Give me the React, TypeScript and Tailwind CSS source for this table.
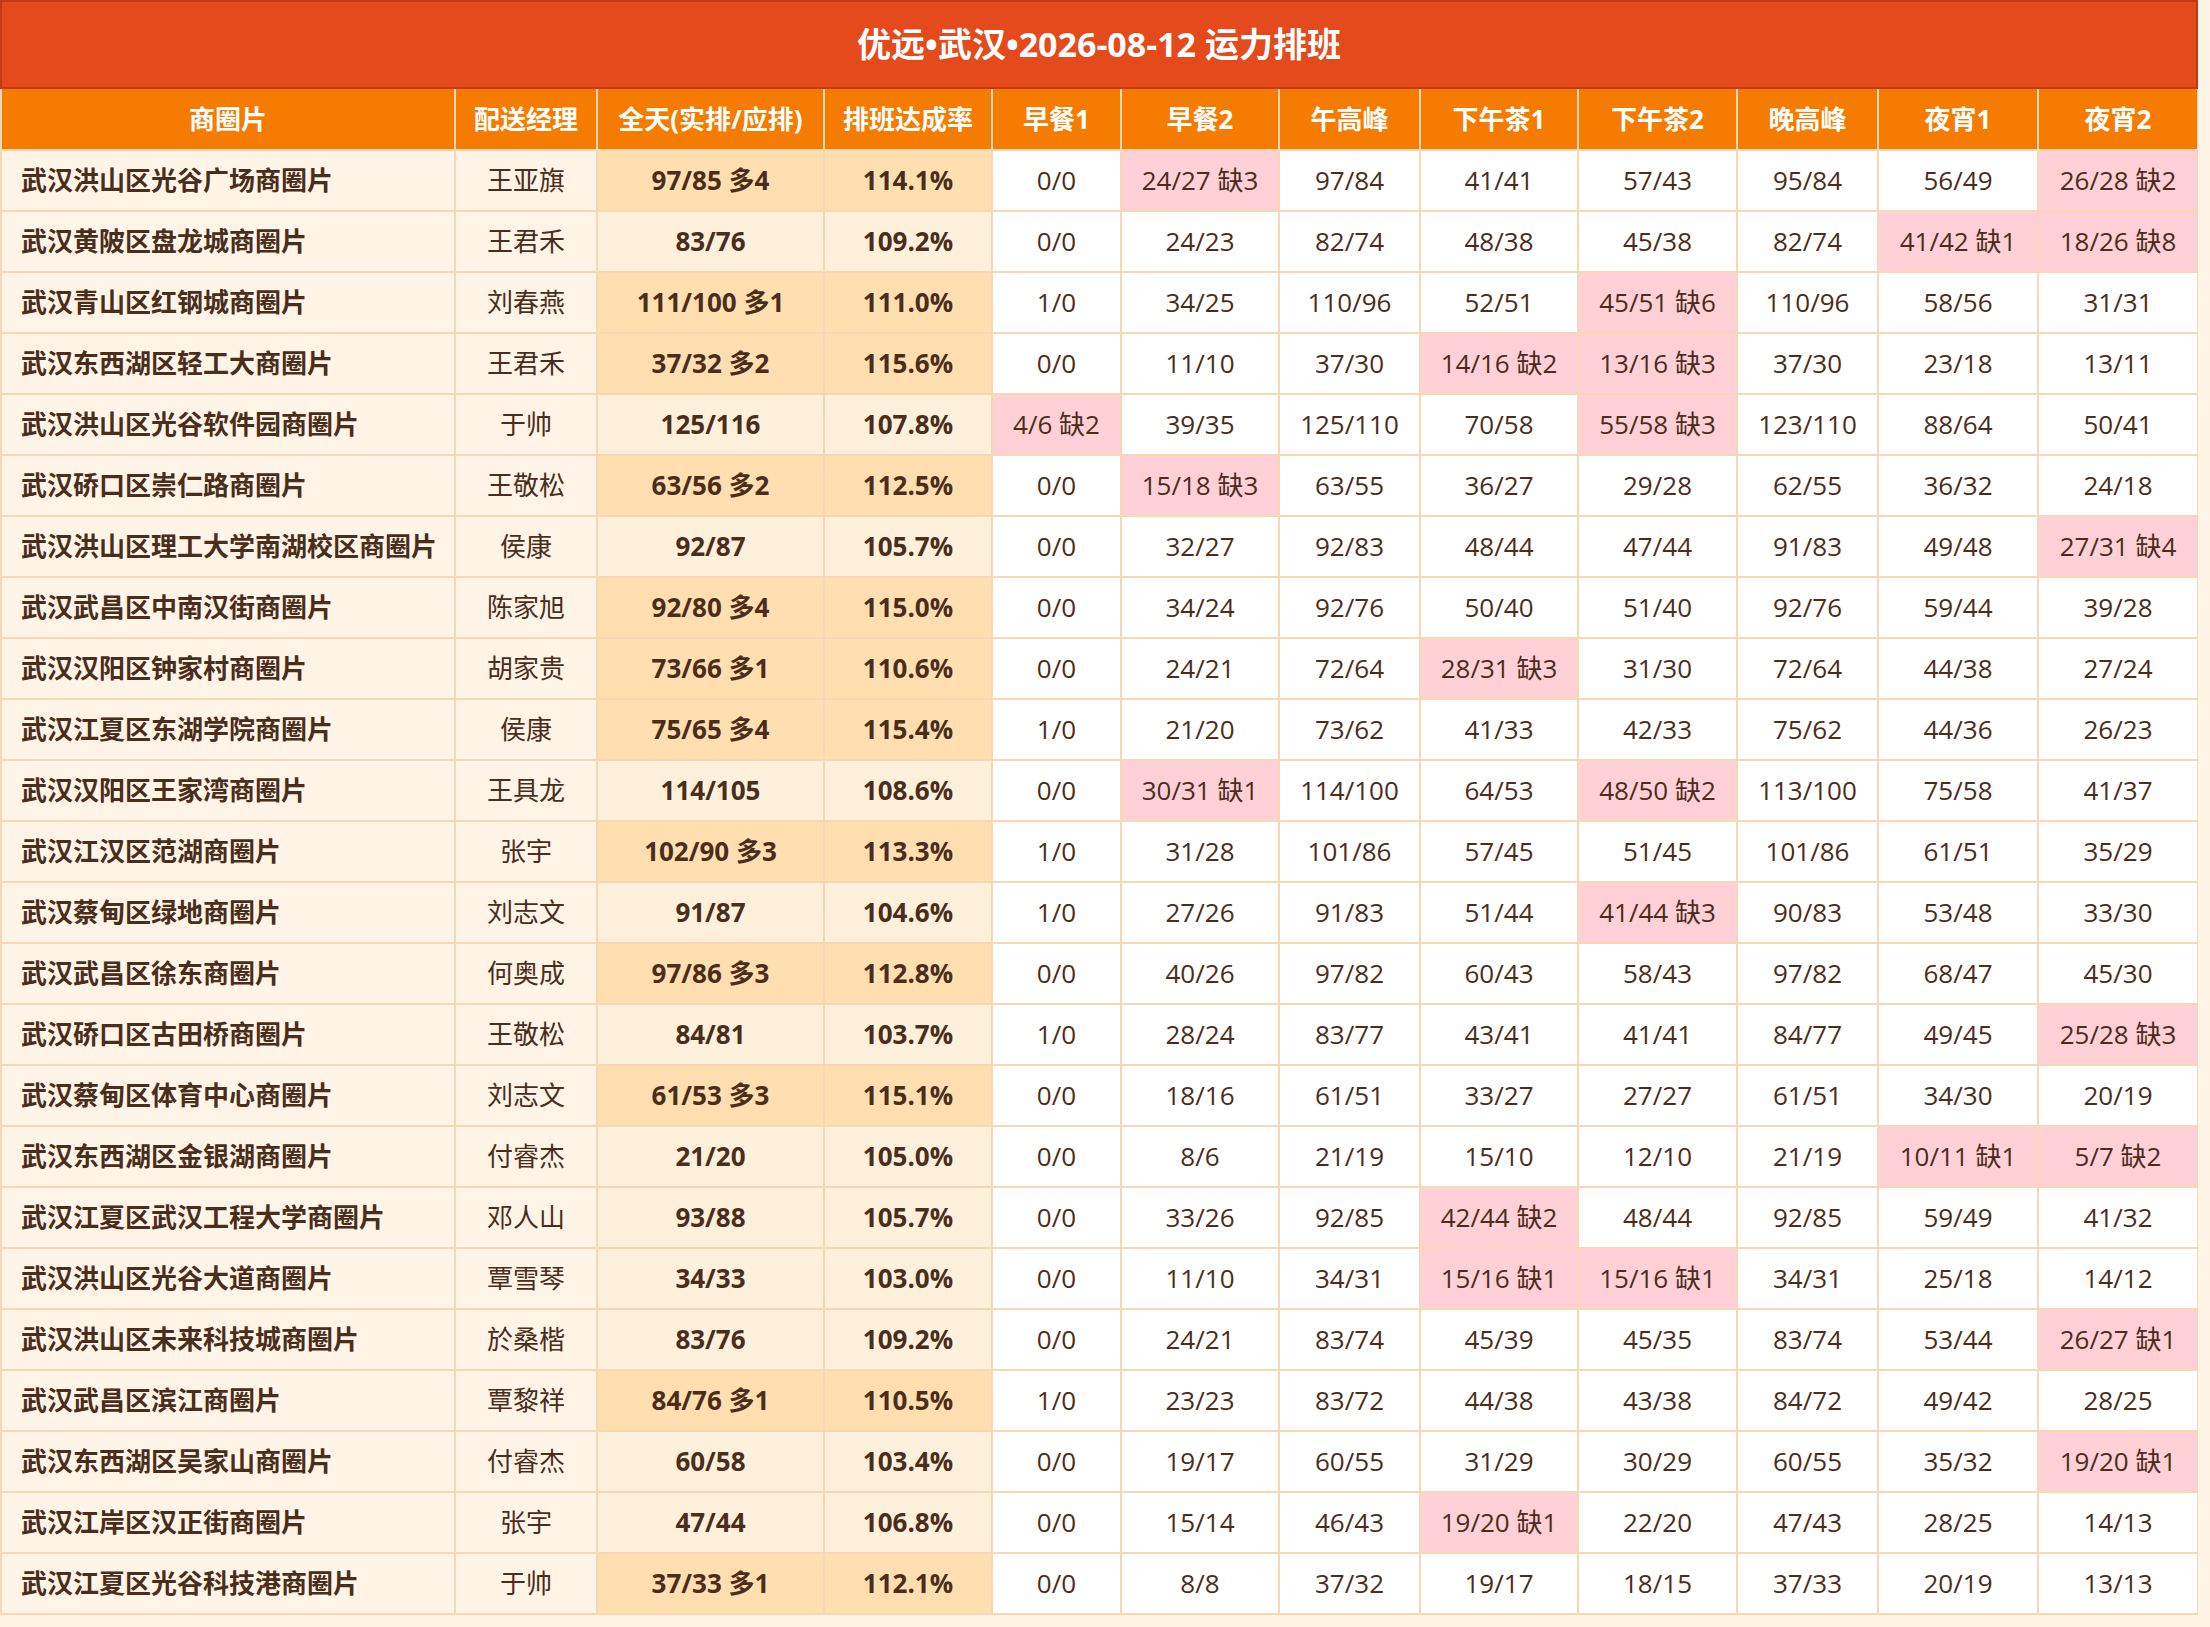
import React from "react";

const headers = ["商圈片", "配送经理", "全天(实排/应排)", "排班达成率", "早餐1", "早餐2", "午高峰", "下午茶1", "下午茶2", "晚高峰", "夜宵1", "夜宵2"];

const rows: string[][] = [
  ["武汉洪山区光谷广场商圈片", "王亚旗", "97/85 多4", "114.1%", "0/0", "24/27 缺3", "97/84", "41/41", "57/43", "95/84", "56/49", "26/28 缺2"],
  ["武汉黄陂区盘龙城商圈片", "王君禾", "83/76", "109.2%", "0/0", "24/23", "82/74", "48/38", "45/38", "82/74", "41/42 缺1", "18/26 缺8"],
  ["武汉青山区红钢城商圈片", "刘春燕", "111/100 多1", "111.0%", "1/0", "34/25", "110/96", "52/51", "45/51 缺6", "110/96", "58/56", "31/31"],
  ["武汉东西湖区轻工大商圈片", "王君禾", "37/32 多2", "115.6%", "0/0", "11/10", "37/30", "14/16 缺2", "13/16 缺3", "37/30", "23/18", "13/11"],
  ["武汉洪山区光谷软件园商圈片", "于帅", "125/116", "107.8%", "4/6 缺2", "39/35", "125/110", "70/58", "55/58 缺3", "123/110", "88/64", "50/41"],
  ["武汉硚口区崇仁路商圈片", "王敬松", "63/56 多2", "112.5%", "0/0", "15/18 缺3", "63/55", "36/27", "29/28", "62/55", "36/32", "24/18"],
  ["武汉洪山区理工大学南湖校区商圈片", "侯康", "92/87", "105.7%", "0/0", "32/27", "92/83", "48/44", "47/44", "91/83", "49/48", "27/31 缺4"],
  ["武汉武昌区中南汉街商圈片", "陈家旭", "92/80 多4", "115.0%", "0/0", "34/24", "92/76", "50/40", "51/40", "92/76", "59/44", "39/28"],
  ["武汉汉阳区钟家村商圈片", "胡家贵", "73/66 多1", "110.6%", "0/0", "24/21", "72/64", "28/31 缺3", "31/30", "72/64", "44/38", "27/24"],
  ["武汉江夏区东湖学院商圈片", "侯康", "75/65 多4", "115.4%", "1/0", "21/20", "73/62", "41/33", "42/33", "75/62", "44/36", "26/23"],
  ["武汉汉阳区王家湾商圈片", "王具龙", "114/105", "108.6%", "0/0", "30/31 缺1", "114/100", "64/53", "48/50 缺2", "113/100", "75/58", "41/37"],
  ["武汉江汉区范湖商圈片", "张宇", "102/90 多3", "113.3%", "1/0", "31/28", "101/86", "57/45", "51/45", "101/86", "61/51", "35/29"],
  ["武汉蔡甸区绿地商圈片", "刘志文", "91/87", "104.6%", "1/0", "27/26", "91/83", "51/44", "41/44 缺3", "90/83", "53/48", "33/30"],
  ["武汉武昌区徐东商圈片", "何奥成", "97/86 多3", "112.8%", "0/0", "40/26", "97/82", "60/43", "58/43", "97/82", "68/47", "45/30"],
  ["武汉硚口区古田桥商圈片", "王敬松", "84/81", "103.7%", "1/0", "28/24", "83/77", "43/41", "41/41", "84/77", "49/45", "25/28 缺3"],
  ["武汉蔡甸区体育中心商圈片", "刘志文", "61/53 多3", "115.1%", "0/0", "18/16", "61/51", "33/27", "27/27", "61/51", "34/30", "20/19"],
  ["武汉东西湖区金银湖商圈片", "付睿杰", "21/20", "105.0%", "0/0", "8/6", "21/19", "15/10", "12/10", "21/19", "10/11 缺1", "5/7 缺2"],
  ["武汉江夏区武汉工程大学商圈片", "邓人山", "93/88", "105.7%", "0/0", "33/26", "92/85", "42/44 缺2", "48/44", "92/85", "59/49", "41/32"],
  ["武汉洪山区光谷大道商圈片", "覃雪琴", "34/33", "103.0%", "0/0", "11/10", "34/31", "15/16 缺1", "15/16 缺1", "34/31", "25/18", "14/12"],
  ["武汉洪山区未来科技城商圈片", "於桑楷", "83/76", "109.2%", "0/0", "24/21", "83/74", "45/39", "45/35", "83/74", "53/44", "26/27 缺1"],
  ["武汉武昌区滨江商圈片", "覃黎祥", "84/76 多1", "110.5%", "1/0", "23/23", "83/72", "44/38", "43/38", "84/72", "49/42", "28/25"],
  ["武汉东西湖区吴家山商圈片", "付睿杰", "60/58", "103.4%", "0/0", "19/17", "60/55", "31/29", "30/29", "60/55", "35/32", "19/20 缺1"],
  ["武汉江岸区汉正街商圈片", "张宇", "47/44", "106.8%", "0/0", "15/14", "46/43", "19/20 缺1", "22/20", "47/43", "28/25", "14/13"],
  ["武汉江夏区光谷科技港商圈片", "于帅", "37/33 多1", "112.1%", "0/0", "8/8", "37/32", "19/17", "18/15", "37/33", "20/19", "13/13"],
];

function cellClass(ci: number, value: string, extra: boolean): string {
  if (ci === 0) return "bg-[#fff4e6] justify-start pl-[19px] font-bold";
  if (ci === 1) return "bg-[#fff4e6] justify-center";
  if (ci === 2 || ci === 3) return (extra ? "bg-[#ffdfb0]" : "bg-[#fff0dc]") + " justify-center font-bold";
  return (value.includes("缺") ? "bg-[#ffd1d6]" : "bg-white") + " justify-center";
}

export default function App() {
  return (
    <div className="w-[2210px] h-[1627px] bg-[#fff4e6] font-['Open_Sans','Noto_Sans_CJK_SC',sans-serif] text-[#4a2d1b] overflow-hidden">
      <div className="w-[2198px]">
        <div className="h-[89px] bg-[#e44a1b] border-2 border-[#c43a16] flex items-center justify-center text-white font-bold text-[34px]">
          优远•武汉•2026-08-12 运力排班
        </div>
        <div className="grid grid-cols-[452px_140px_225px_166px_127px_156px_139px_156px_157px_139px_158px_158px] gap-[2px] bg-[#f6d8b6] px-[2px] pb-[2px]">
          {headers.map((h) => (
            <div key={h} className="h-[60px] bg-[#f57c00] text-white font-bold text-[26px] flex items-center justify-center">
              {h}
            </div>
          ))}
          {rows.map((r, ri) => {
            const extra = r[2].includes("多");
            return r.map((v, ci) => (
              <div
                key={ri + "-" + ci}
                className={"h-[59px] flex items-center text-[26px] whitespace-nowrap " + cellClass(ci, v, extra)}
              >
                {v}
              </div>
            ));
          })}
        </div>
      </div>
    </div>
  );
}
